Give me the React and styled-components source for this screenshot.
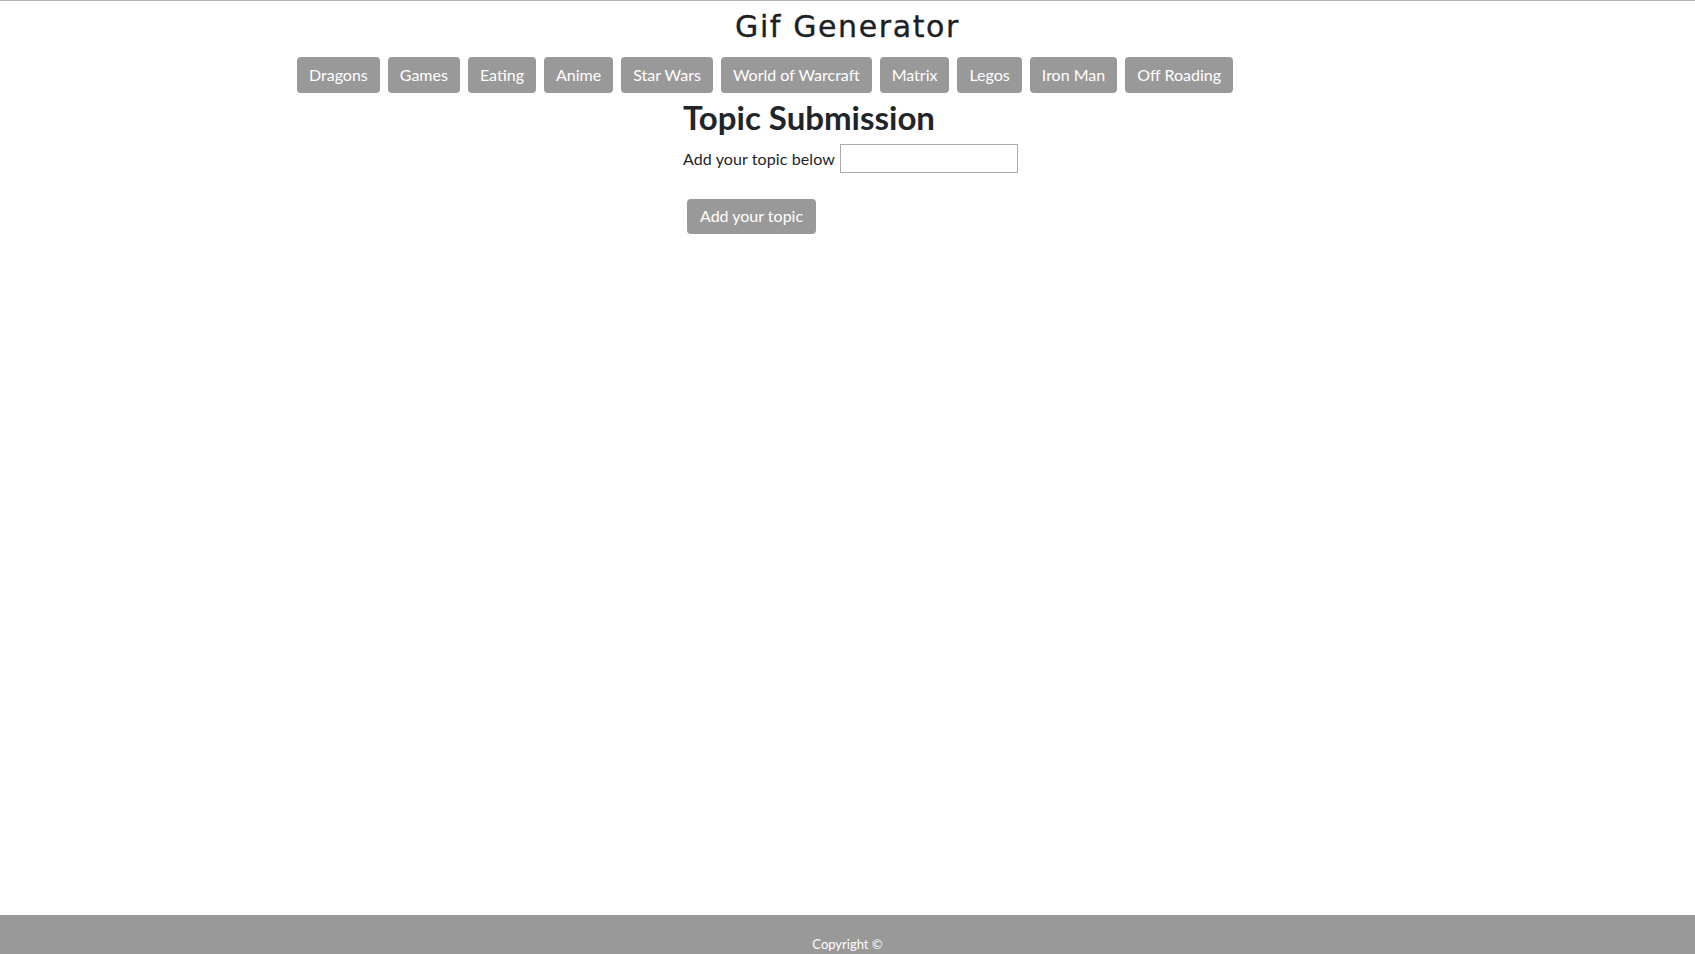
import React from "react";
import styled, { createGlobalStyle } from "styled-components";

const topics = [
  "Dragons",
  "Games",
  "Eating",
  "Anime",
  "Star Wars",
  "World of Warcraft",
  "Matrix",
  "Legos",
  "Iron Man",
  "Off Roading",
];

const GlobalStyle = createGlobalStyle`
  * {
    box-sizing: border-box;
  }
  body {
    margin: 0;
    font-family: "Lato", "Noto Sans", sans-serif;
    color: #212529;
    background: #fff;
  }
`;

export default function App() {
  return (
    <>
      <GlobalStyle />
      <Page>
        <Header>
          <Title>Gif Generator</Title>
        </Header>
        <TopicBar>
          {topics.map((t) => (
            <GreyButton key={t}>{t}</GreyButton>
          ))}
        </TopicBar>
        <Submission>
          <Heading>Topic Submission</Heading>
          <FormRow>
            <Label htmlFor="topic">Add your topic below</Label>
            <TopicInput id="topic" type="text" />
          </FormRow>
          <SubmitRow>
            <GreyButton $tall={35} $pad={13}>
              Add your topic
            </GreyButton>
          </SubmitRow>
        </Submission>
        <Footer>Copyright ©</Footer>
      </Page>
    </>
  );
}

const Page = styled.div`
  display: flex;
  flex-direction: column;
  min-height: 100vh;
  border-top: 1px solid #b3b3b3;
`;

const Header = styled.header`
  padding-top: 8px;
  text-align: center;
`;

const Title = styled.h1`
  margin: 0;
  font-family: "DejaVu Sans", Verdana, sans-serif;
  font-size: 30px;
  font-weight: 400;
  line-height: 35px;
  letter-spacing: 1.6px;
  color: #1c1f23;
  -webkit-text-stroke: 0.35px #1c1f23;
`;

const TopicBar = styled.nav`
  display: flex;
  gap: 8px;
  margin-top: 13px;
  padding-left: 297px;
`;

const GreyButton = styled.button`
  height: ${(p) => p.$tall || 36}px;
  padding: 0 ${(p) => p.$pad || 12}px;
  border: none;
  border-radius: 4px;
  background: #999999;
  color: #ffffff;
  font-family: "Lato", "Noto Sans", sans-serif;
  font-size: 16px;
  line-height: 1;
  cursor: pointer;
`;

const Submission = styled.section`
  display: flex;
  flex-direction: column;
  align-items: flex-start;
  padding-left: 683px;
  margin-top: 3.5px;
`;

const Heading = styled.h2`
  margin: 0;
  font-size: 33px;
  font-weight: 700;
  line-height: 40px;
`;

const FormRow = styled.div`
  display: flex;
  align-items: center;
  gap: 5.5px;
  margin-top: 7px;
`;

const Label = styled.label`
  font-size: 16px;
  line-height: 29px;
  letter-spacing: 0.1px;
`;

const TopicInput = styled.input`
  width: 178px;
  height: 29px;
  border: 1px solid #a9a9a9;
  border-radius: 0;
  padding: 0 4px;
  font-family: "Lato", sans-serif;
  font-size: 16px;
  outline: none;
`;

const SubmitRow = styled.div`
  margin-top: 26px;
  padding-left: 4px;
`;

const Footer = styled.footer`
  margin-top: auto;
  height: 39px;
  padding-top: 21px;
  background: #999999;
  color: #ffffff;
  text-align: center;
  font-size: 13px;
  line-height: 16px;
`;
